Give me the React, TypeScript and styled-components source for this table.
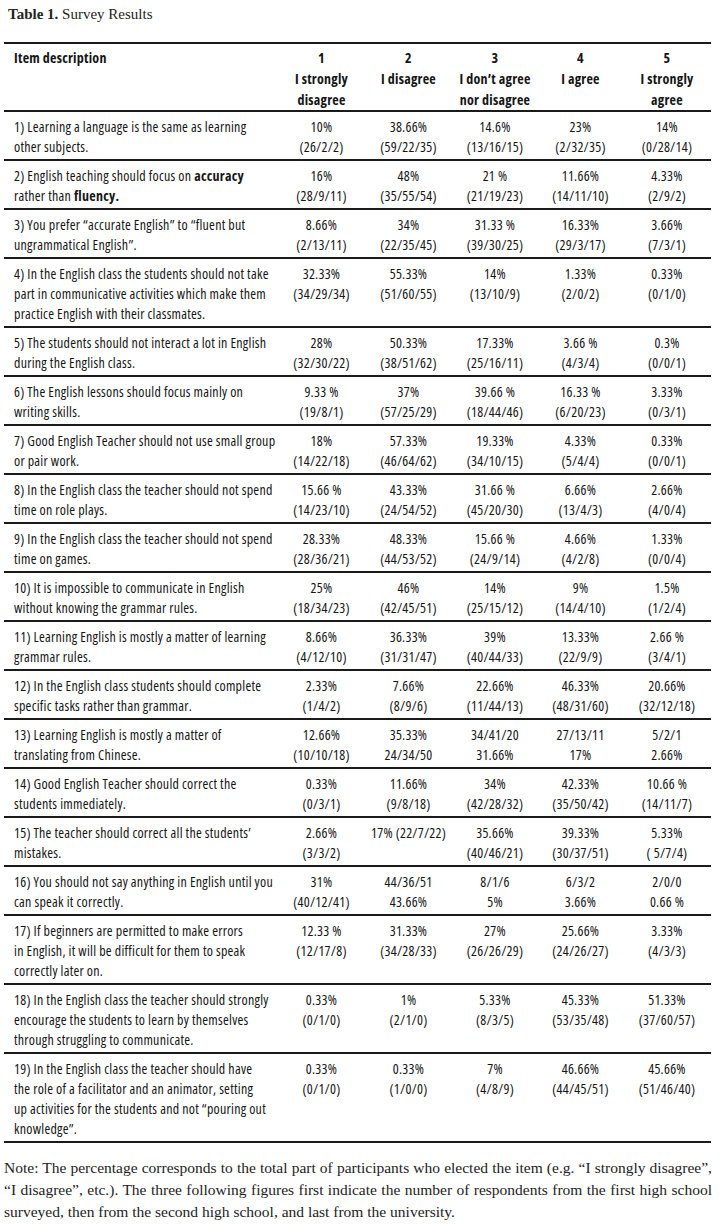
import React from "react";
import styled, { createGlobalStyle } from "styled-components";

const Global = createGlobalStyle`
  html, body { margin: 0; padding: 0; background: #fff; }
  body { color: #1a1a1a; }
`;

const Page = styled.div`
  width: 728px;
  padding: 4px 16px 0 4px;
  box-sizing: border-box;
`;

const Title = styled.div`
  font-family: "Liberation Serif", "Times New Roman", serif;
  font-size: 15px;
  line-height: 20px;
  padding-left: 4px;
  margin-bottom: 18px;
  color: #222;
  b { font-weight: bold; }
`;

const Table = styled.table`
  width: 707px;
  border-collapse: collapse;
  table-layout: fixed;
  font-family: "Open Sans", sans-serif;
  font-stretch: 75%;
  letter-spacing: 0.25px;
  font-size: 14px;
  font-weight: 500;
  color: #151515;
`;

const HeadCell = styled.th<{ $left?: boolean }>`
  border-top: 2px solid #1a1a1a;
  border-bottom: 2px solid #1a1a1a;
  padding: 3px 0 0 ${(p) => (p.$left ? "10px" : "0")};
  text-align: ${(p) => (p.$left ? "left" : "center")};
  vertical-align: top;
  font-weight: 700;
  line-height: 21px;
`;

const Cell = styled.td<{ $left?: boolean }>`
  border-bottom: 2px solid #1a1a1a;
  padding: 5px 0 2px ${(p) => (p.$left ? "10px" : "0")};
  text-align: ${(p) => (p.$left ? "left" : "center")};
  vertical-align: top;
  line-height: 20px;
  b { font-weight: 700; }
`;

const Line = styled.span`
  display: block;
  white-space: nowrap;
`;

const Note = styled.div`
  margin-top: 14px;
  font-family: "Liberation Serif", "Times New Roman", serif;
  font-size: 15.5px;
  line-height: 22px;
  color: #222;
  width: 708px;
`;

const NoteLine = styled.div<{ $justify?: boolean }>`
  text-align: ${(p) => (p.$justify ? "justify" : "left")};
  text-align-last: ${(p) => (p.$justify ? "justify" : "left")};
  white-space: nowrap;
`;

type Row = { d: React.ReactNode[]; c: string[][] };

const rows: Row[] = [
  { d: ["1) Learning a language is the same as learning", "other subjects."], c: [["10%", "(26/2/2)"], ["38.66%", "(59/22/35)"], ["14.6%", "(13/16/15)"], ["23%", "(2/32/35)"], ["14%", "(0/28/14)"]] },
  { d: [<>2) English teaching should focus on <b>accuracy</b></>, <>rather than <b>fluency.</b></>], c: [["16%", "(28/9/11)"], ["48%", "(35/55/54)"], ["21 %", "(21/19/23)"], ["11.66%", "(14/11/10)"], ["4.33%", "(2/9/2)"]] },
  { d: ["3) You prefer \u201caccurate English\u201d to \u201cfluent but", "ungrammatical English\u201d."], c: [["8.66%", "(2/13/11)"], ["34%", "(22/35/45)"], ["31.33 %", "(39/30/25)"], ["16.33%", "(29/3/17)"], ["3.66%", "(7/3/1)"]] },
  { d: ["4) In the English class the students should not take", "part in communicative activities which make them", "practice English with their classmates."], c: [["32.33%", "(34/29/34)"], ["55.33%", "(51/60/55)"], ["14%", "(13/10/9)"], ["1.33%", "(2/0/2)"], ["0.33%", "(0/1/0)"]] },
  { d: ["5) The students should not interact a lot in English", "during the English class."], c: [["28%", "(32/30/22)"], ["50.33%", "(38/51/62)"], ["17.33%", "(25/16/11)"], ["3.66 %", "(4/3/4)"], ["0.3%", "(0/0/1)"]] },
  { d: ["6) The English lessons should focus mainly on", "writing skills."], c: [["9.33 %", "(19/8/1)"], ["37%", "(57/25/29)"], ["39.66 %", "(18/44/46)"], ["16.33 %", "(6/20/23)"], ["3.33%", "(0/3/1)"]] },
  { d: ["7) Good English Teacher should not use small group", "or pair work."], c: [["18%", "(14/22/18)"], ["57.33%", "(46/64/62)"], ["19.33%", "(34/10/15)"], ["4.33%", "(5/4/4)"], ["0.33%", "(0/0/1)"]] },
  { d: ["8) In the English class the teacher should not spend", "time on role plays."], c: [["15.66 %", "(14/23/10)"], ["43.33%", "(24/54/52)"], ["31.66 %", "(45/20/30)"], ["6.66%", "(13/4/3)"], ["2.66%", "(4/0/4)"]] },
  { d: ["9) In the English class the teacher should not spend", "time on games."], c: [["28.33%", "(28/36/21)"], ["48.33%", "(44/53/52)"], ["15.66 %", "(24/9/14)"], ["4.66%", "(4/2/8)"], ["1.33%", "(0/0/4)"]] },
  { d: ["10) It is impossible to communicate in English", "without knowing the grammar rules."], c: [["25%", "(18/34/23)"], ["46%", "(42/45/51)"], ["14%", "(25/15/12)"], ["9%", "(14/4/10)"], ["1.5%", "(1/2/4)"]] },
  { d: ["11) Learning English is mostly a matter of learning", "grammar rules."], c: [["8.66%", "(4/12/10)"], ["36.33%", "(31/31/47)"], ["39%", "(40/44/33)"], ["13.33%", "(22/9/9)"], ["2.66 %", "(3/4/1)"]] },
  { d: ["12) In the English class students should complete", "specific tasks rather than grammar."], c: [["2.33%", "(1/4/2)"], ["7.66%", "(8/9/6)"], ["22.66%", "(11/44/13)"], ["46.33%", "(48/31/60)"], ["20.66%", "(32/12/18)"]] },
  { d: ["13) Learning English is mostly a matter of", "translating from Chinese."], c: [["12.66%", "(10/10/18)"], ["35.33%", "24/34/50"], ["34/41/20", "31.66%"], ["27/13/11", "17%"], ["5/2/1", "2.66%"]] },
  { d: ["14) Good English Teacher should correct the", "students immediately."], c: [["0.33%", "(0/3/1)"], ["11.66%", "(9/8/18)"], ["34%", "(42/28/32)"], ["42.33%", "(35/50/42)"], ["10.66 %", "(14/11/7)"]] },
  { d: ["15) The teacher should correct all the students\u2019", "mistakes."], c: [["2.66%", "(3/3/2)"], ["17% (22/7/22)"], ["35.66%", "(40/46/21)"], ["39.33%", "(30/37/51)"], ["5.33%", "( 5/7/4)"]] },
  { d: ["16) You should not say anything in English until you", "can speak it correctly."], c: [["31%", "(40/12/41)"], ["44/36/51", "43.66%"], ["8/1/6", "5%"], ["6/3/2", "3.66%"], ["2/0/0", "0.66 %"]] },
  { d: ["17) If beginners are permitted to make errors", "in English, it will be difficult for them to speak", "correctly later on."], c: [["12.33 %", "(12/17/8)"], ["31.33%", "(34/28/33)"], ["27%", "(26/26/29)"], ["25.66%", "(24/26/27)"], ["3.33%", "(4/3/3)"]] },
  { d: ["18) In the English class the teacher should strongly", "encourage the students to learn by themselves", "through struggling to communicate."], c: [["0.33%", "(0/1/0)"], ["1%", "(2/1/0)"], ["5.33%", "(8/3/5)"], ["45.33%", "(53/35/48)"], ["51.33%", "(37/60/57)"]] },
  { d: ["19) In the English class the teacher should have", "the role of a facilitator and an animator, setting", "up activities for the students and not \u201cpouring out", "knowledge\u201d."], c: [["0.33%", "(0/1/0)"], ["0.33%", "(1/0/0)"], ["7%", "(4/8/9)"], ["46.66%", "(44/45/51)"], ["45.66%", "(51/46/40)"]] },
];

const headers: string[][] = [
  ["1", "I strongly", "disagree"],
  ["2", "I disagree"],
  ["3", "I don\u2019t agree", "nor disagree"],
  ["4", "I agree"],
  ["5", "I strongly", "agree"],
];

export default function App() {
  return (
    <Page>
      <Global />
      <Title>
        <b>Table 1.</b> Survey Results
      </Title>
      <Table>
        <colgroup>
          <col style={{ width: 274 }} />
          <col style={{ width: 87 }} />
          <col style={{ width: 87 }} />
          <col style={{ width: 86 }} />
          <col style={{ width: 85 }} />
          <col style={{ width: 88 }} />
        </colgroup>
        <thead>
          <tr>
            <HeadCell $left>Item description</HeadCell>
            {headers.map((h, i) => (
              <HeadCell key={i}>
                {h.map((l, j) => (
                  <Line key={j}>{l}</Line>
                ))}
              </HeadCell>
            ))}
          </tr>
        </thead>
        <tbody>
          {rows.map((r, i) => (
            <tr key={i}>
              <Cell $left>
                {r.d.map((l, j) => (
                  <Line key={j}>{l}</Line>
                ))}
              </Cell>
              {r.c.map((c, k) => (
                <Cell key={k}>
                  {c.map((l, j) => (
                    <Line key={j}>{l}</Line>
                  ))}
                </Cell>
              ))}
            </tr>
          ))}
        </tbody>
      </Table>
      <Note>
        <NoteLine $justify>
          Note: The percentage corresponds to the total part of participants who elected the item (e.g. “I strongly disagree”,
        </NoteLine>
        <NoteLine $justify>
          “I disagree”, etc.). The three following figures first indicate the number of respondents from the first high school
        </NoteLine>
        <NoteLine>surveyed, then from the second high school, and last from the university.</NoteLine>
      </Note>
    </Page>
  );
}
